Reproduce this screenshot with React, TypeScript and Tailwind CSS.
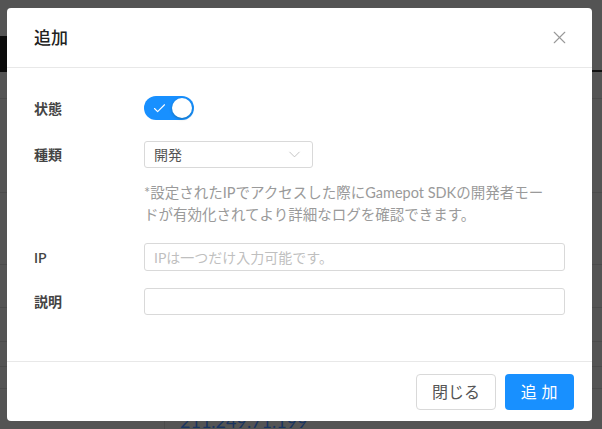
import { X, Check, ChevronDown } from "lucide-react";

const font = { fontFamily: 'Lato, "Noto Sans CJK JP", "Noto Sans", sans-serif' };

const Row = ({ label, children }: { label: string; children: React.ReactNode }) => (
  <div className="flex items-center">
    <div className="w-[110px] shrink-0 text-[14px] font-semibold text-[#444]">{label}</div>
    <div className="flex-1">{children}</div>
  </div>
);

export default function App() {
  return (
    <div className="relative h-[429px] w-[602px] overflow-hidden bg-[#545454]" style={font}>
      {/* page behind the overlay */}
      <div className="mt-[36px] flex h-[36px]">
        <div className="w-[592px] bg-[#0b0b0b]" />
        <div className="flex-1 border-b-2 border-[#111]" />
      </div>
      <div className="h-[27px] border-b border-[#4b4b4b]" />
      <div className="h-[94px] border-b border-[#4b4b4b]" />
      <div className="h-[72px] border-b border-[#4b4b4b]" />
      <div className="h-[43px] border-b border-[#4b4b4b]" />
      <div className="h-[34px] border-b border-[#4b4b4b]" />
      <div className="h-[25px] border-b border-[#4b4b4b]" />
      <div className="h-[22px] border-b border-[#4b4b4b]" />
      <div className="flex h-[40px]">
        <div className="w-[165px] border-r border-[#4b4b4b]" />
        <div className="pl-[15px] pt-[21px] text-[18px] leading-[22px] text-[#1a3560]">211.249.71.199</div>
      </div>

      {/* modal */}
      <div className="absolute left-[7px] top-[8px] flex h-[413px] w-[585px] flex-col rounded-[4px] bg-white">
        <div className="flex h-[60px] shrink-0 items-center justify-between border-b border-[#e8e8e8] pl-[27px] pr-[22px]">
          <span className="text-[17px] font-medium text-[#222]">追加</span>
          <X size={21} strokeWidth={1.3} className="text-[#999]" />
        </div>

        <div className="flex flex-1 flex-col pl-[27px] pr-[27px] pt-[28px]">
          <Row label="状態">
            <div className="flex h-[24px] w-[50px] items-center justify-between rounded-full bg-[#1890ff] pl-[8px] pr-[2px]">
              <Check size={15} strokeWidth={1.8} className="text-white" />
              <div className="h-[20px] w-[20px] rounded-full bg-white shadow-[0_1px_3px_rgba(0,35,11,0.3)]" />
            </div>
          </Row>

          <div className="mt-[21px]">
            <Row label="種類">
              <div className="flex h-[27px] w-[169px] items-center justify-between rounded-[3px] border border-[#d9d9d9] pl-[9px] pr-[8px] text-[14px] text-[#555]">
                <span>開発</span>
                <ChevronDown size={19} strokeWidth={1.1} className="text-[#bbb]" />
              </div>
            </Row>
          </div>

          <div className="ml-[110px] mt-[14px] text-[14.5px] leading-[22px] text-[#9a9a9a]">
            *設定されたIPでアクセスした際にGamepot SDKの開発者モー
            <br />
            ドが有効化されてより詳細なログを確認できます。
          </div>

          <div className="mt-[17px]">
            <Row label="IP">
              <div className="flex h-[28px] items-center rounded-[3px] border border-[#d9d9d9] px-[9px] text-[14px] text-[#bfbfbf]">
                IPは一つだけ入力可能です。
              </div>
            </Row>
          </div>

          <div className="mt-[17px]">
            <Row label="説明">
              <div className="h-[27px] rounded-[3px] border border-[#d9d9d9]" />
            </Row>
          </div>
        </div>

        <div className="flex h-[60px] shrink-0 items-center justify-end gap-[9px] border-t border-[#e8e8e8] pr-[18px]">
          <button className="h-[36px] w-[80px] rounded-[4px] border border-[#d9d9d9] bg-white text-[16px] text-[#555]">
            閉じる
          </button>
          <button className="h-[36px] w-[69px] rounded-[4px] bg-[#1890ff] pl-[4px] text-[16px] tracking-[0.3em] text-white">
            追加
          </button>
        </div>
      </div>
    </div>
  );
}
